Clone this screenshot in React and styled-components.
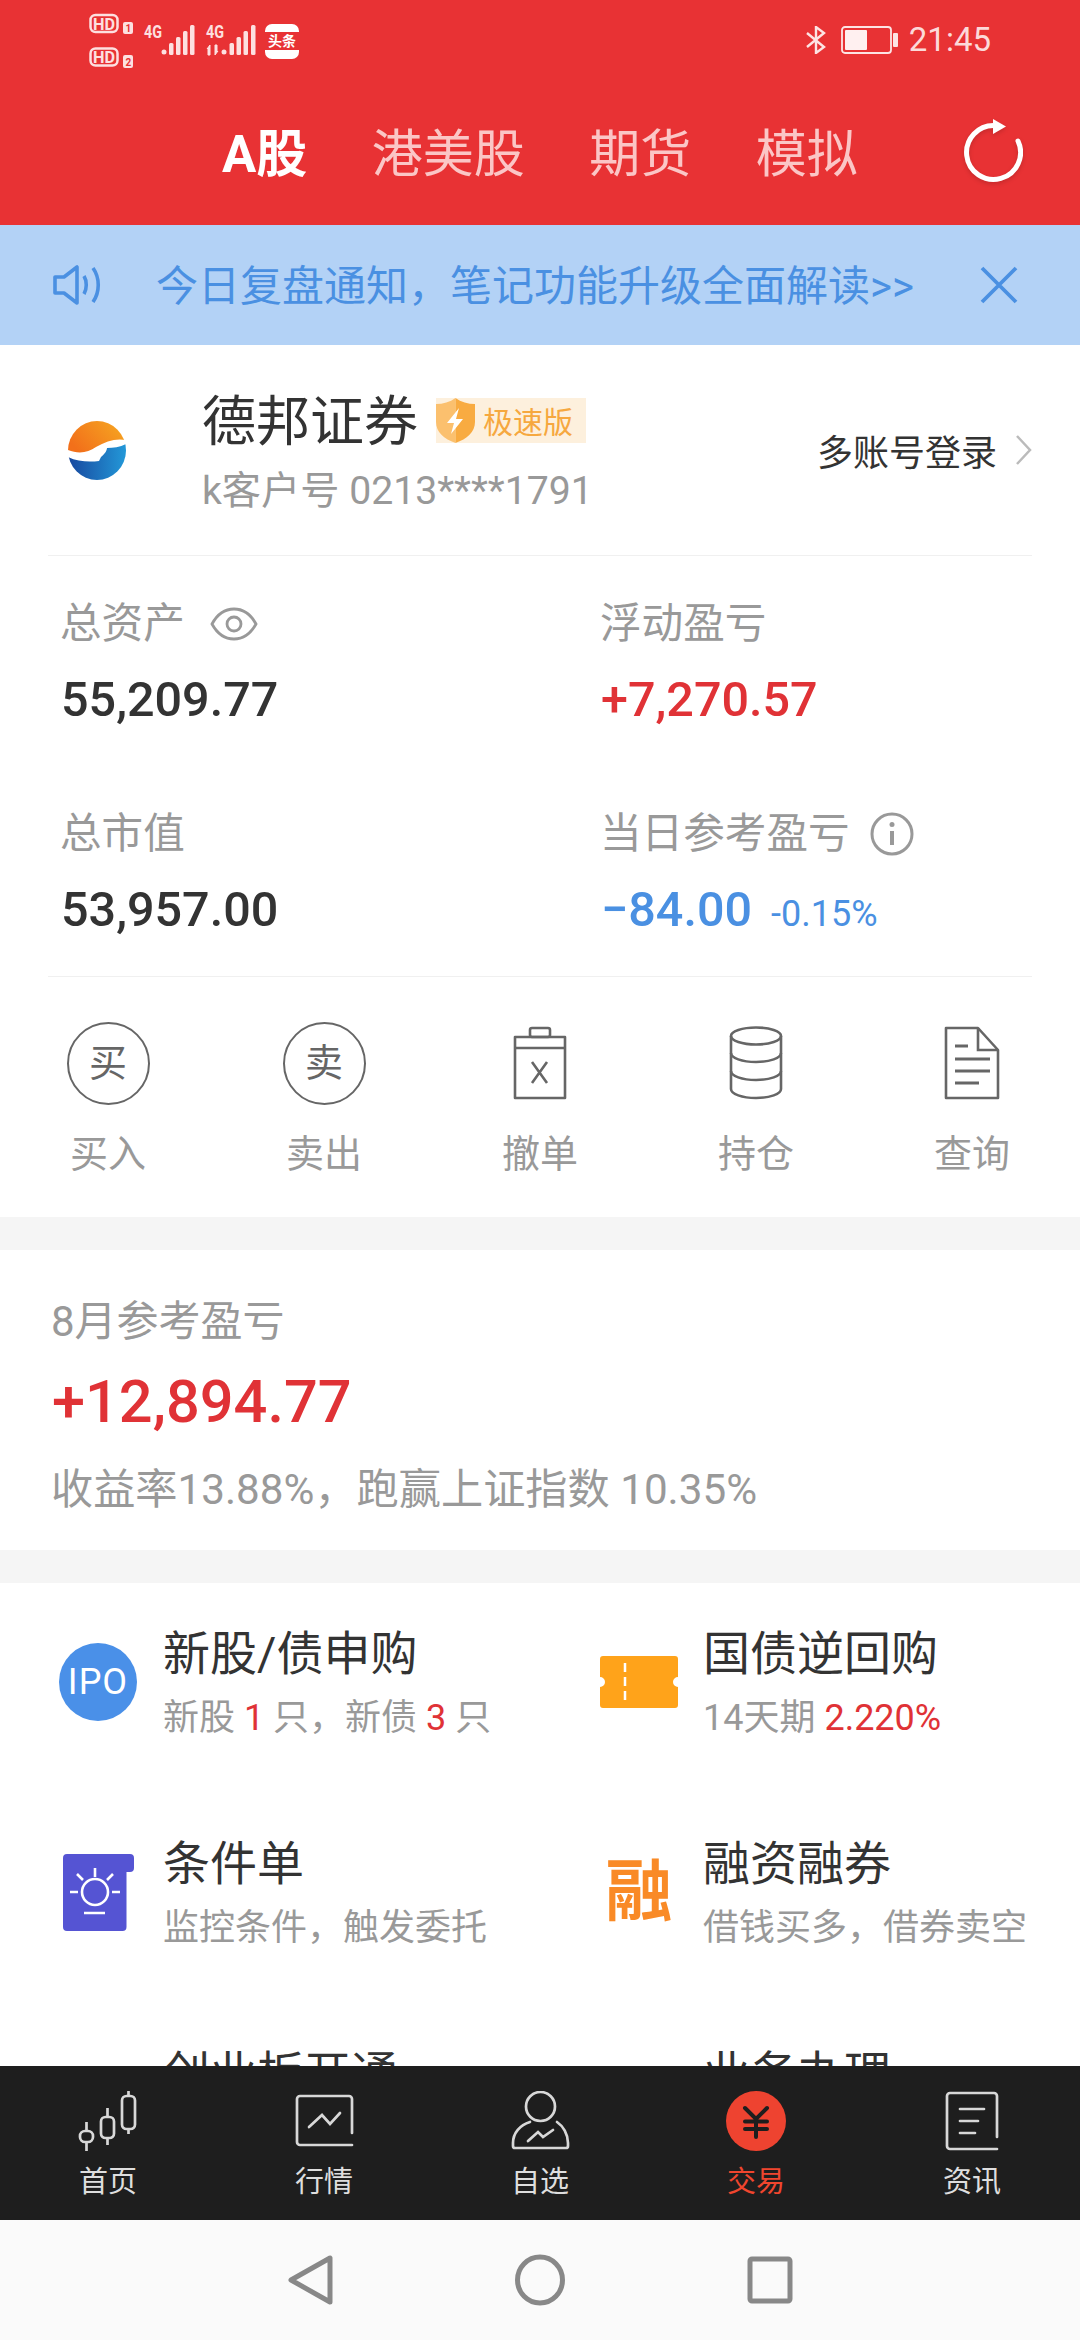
import React from "react";
import styled, { createGlobalStyle } from "styled-components";

const Global = createGlobalStyle`
  html, body { margin: 0; padding: 0; background: #fff; }
  body { font-family: Roboto, "Noto Sans CJK SC", sans-serif; }
  * { box-sizing: border-box; }
`;

const Page = styled.div`
  width: 1080px; height: 2340px; display: flex; flex-direction: column; overflow: hidden;
  background: #f5f5f5;
`;
const Header = styled.header`background: #e83234; height: 225px; flex: none;`;
const StatusBar = styled.div`height: 80px; display: flex; align-items: center; justify-content: space-between; padding: 0 89px 0 70px;`;
const StatusRight = styled.div`display: flex; align-items: center;`;
const Clock = styled.span`font-size: 33px; font-weight: 400; color: #fcd9d9; margin-left: 10px; line-height: 40px;`;
const Tabs = styled.nav`height: 145px; display: flex; align-items: center; gap: 64.5px; padding: 0 57px 0 222px;`;
const Tab = styled.span`
  font-size: 51px; line-height: 64px; margin-top: 5px;
  color: ${p => (p.$active ? "#fff" : "#fbc6c6")};
  font-weight: ${p => (p.$active ? 700 : 400)};
`;
const Refresh = styled.svg`margin-left: auto; flex: none; width: 60px; height: 68px; filter: drop-shadow(0 2px 2px rgba(0,0,0,.15));`;

const Notice = styled.div`
  height: 120px; flex: none; background: #b3d2f6; display: flex; align-items: center; padding: 0 62px 0 53px;
`;
const NoticeText = styled.span`font-size: 42px; line-height: 56px; padding-top: 3px; color: #4a90e2; margin-left: 53px; white-space: nowrap; flex: 1;`;

const Scroll = styled.main`flex: 1; min-height: 0; overflow: hidden; display: flex; flex-direction: column; gap: 33px;`;
const Card = styled.section`background: #fff; flex: ${p => (p.$fill ? 1 : "none")};`;

const AccountHead = styled.div`
  margin: 0 48px; padding: 30px 0 30px 20px; border-bottom: 1px solid #f0f0f0;
  display: flex; align-items: center;
`;
const Logo = styled.svg`width: 58px; height: 59px; flex: none;`;
const Identity = styled.div`margin-left: 76px; padding-top: 14px; flex: 1;`;
const TitleLine = styled.div`display: flex; align-items: center; height: 68px;`;
const BrokerName = styled.span`font-size: 54px; color: #333; line-height: 68px;`;
const SpeedBadge = styled.span`
  display: flex; align-items: center; height: 45px; margin-left: 18px; background: #fdf0dd; padding-right: 13px;
  font-size: 30px; color: #f6a83f; margin-top: -6px;
`;
const Shield = styled.svg`width: 39px; height: 45px; margin-right: 8px;`;
const AccountNo = styled.div`font-size: 39.2px; line-height: 68px; color: #999;`;
const LoginLink = styled.div`display: flex; align-items: center; font-size: 36px; color: #333; gap: 18px;`;
const Chevron = styled.svg`width: 17px; height: 32px;`;

const Stats = styled.div`display: grid; grid-template-columns: 1fr 1fr;`;
const StatCell = styled.div`padding: 43px 0 31px 61px;`;
const StatLabel = styled.div`display: flex; align-items: center; font-size: 41.6px; line-height: 50px; color: #999; margin-left: -1px; gap: ${p => p.$gap || 0}px;`;
const StatValue = styled.div`
  margin-top: 16px; font-size: 48.5px; line-height: 70px; height: 70px; font-weight: 500; color: ${p => p.$color || "#333"};
  display: flex; align-items: baseline;
`;
const Percent = styled.span`font-size: 36px; line-height: 1; font-weight: 400; margin-left: 19px;`;
const SmallIcon = styled.svg`flex: none;`;

const Rule = styled.div`margin: 0 48px; height: 1px; background: #f0f0f0;`;

const Actions = styled.div`display: grid; grid-template-columns: repeat(5, 1fr); padding: 44px 0 38px;`;
const Action = styled.div`display: flex; flex-direction: column; align-items: center;`;
const ActionIconBox = styled.div`height: 84px; display: flex; align-items: center; justify-content: center;`;
const Round = styled.span`
  width: 83px; height: 83px; border: 2.5px solid #666; border-radius: 50%; display: flex; align-items: center; justify-content: center;
  color: #666; font-size: 38px; line-height: 1;
`;
const ActionLabel = styled.span`margin-top: 24px; font-size: 38px; line-height: 50px; color: #999;`;

const Profit = styled.div`padding: 47px 0 35px 52px;`;
const ProfitLabel = styled.div`font-size: 42px; line-height: 50px; color: #999; margin-left: -1px;`;
const ProfitValue = styled.div`margin-top: 17px; font-size: 59.5px; line-height: 76px; font-weight: 500; color: #e03236;`;
const ProfitSub = styled.div`margin: 25px 0 0 -1px; font-size: 42.2px; line-height: 50px; color: #999; white-space: nowrap;`;

const Menu = styled.div`display: grid; grid-template-columns: 1fr 1fr;`;
const MenuItem = styled.div`display: flex; padding: 39px 0 50px;`;
const MenuIconSlot = styled.div`
  width: 163px; flex: none; height: 80px; margin-top: 20px; display: flex; align-items: center; justify-content: center; padding-left: ${p => p.$left || 0}px;
`;
const MenuText = styled.div`min-width: 0;`;
const MenuTitle = styled.div`font-size: 47px; line-height: 64px; color: #333; white-space: nowrap;`;
const MenuSub = styled.div`margin-top: 7px; font-size: 36px; line-height: 50px; color: #999; white-space: nowrap;`;
const Red = styled.span`color: #e03236;`;
const IpoIcon = styled.span`
  width: 78px; height: 78px; border-radius: 50%; background: #4a90e8; color: #fff; font-size: 36px; letter-spacing: 1px;
  display: flex; align-items: center; justify-content: center;
`;
const RongGlyph = styled.span`font-size: 67px; line-height: 70px; font-weight: 700; color: #f98a26;`;

const TabBar = styled.nav`height: 154px; flex: none; background: #1e1e1e; display: grid; grid-template-columns: repeat(5, 1fr); padding-top: 25px;`;
const TabItem = styled.div`display: flex; flex-direction: column; align-items: center;`;
const TabIcon = styled.svg`width: 60px; height: 60px;`;
const TabLabel = styled.span`margin-top: 13px; font-size: 29px; line-height: 36px; color: ${p => (p.$active ? "#f0462e" : "#dedede")};`;

const SystemBar = styled.div`height: 120px; flex: none; background: #fafafa; display: flex; align-items: center; justify-content: center;`;
const SysIcon = styled.svg`width: 50px; height: 52px; flex: none;`;
const SysIcons = styled.div`display: flex; align-items: center; width: 510px; justify-content: space-between;`;

const StatusLeftIcons = () => (
  <svg width="260" height="80" viewBox="0 0 260 80">
    <g fill="none" stroke="#fde0e0" strokeWidth="2.500">
      <rect x="20.500" y="15" width="27" height="17" rx="5" />
      <rect x="20.500" y="48.500" width="27" height="17" rx="5" />
    </g>
    <g fill="#fde0e0" fontFamily="Roboto, sans-serif" fontWeight="700">
      <text x="23" y="29.500" fontSize="16" textLength="22" lengthAdjust="spacingAndGlyphs">HD</text>
      <text x="23" y="63" fontSize="16" textLength="22" lengthAdjust="spacingAndGlyphs">HD</text>
      <rect x="53" y="22" width="10" height="12" rx="2" />
      <rect x="53" y="55" width="10" height="13" rx="2" />
      <text x="74" y="38" fontSize="19" textLength="18" lengthAdjust="spacingAndGlyphs">4G</text>
      <text x="136" y="38" fontSize="19" textLength="18" lengthAdjust="spacingAndGlyphs">4G</text>
      <circle cx="94" cy="52" r="2.500" />
      <rect x="99" y="43" width="4.500" height="12" rx="1.500" />
      <rect x="106" y="37" width="4.500" height="18" rx="1.500" />
      <rect x="113" y="31" width="4.500" height="24" rx="1.500" />
      <rect x="120" y="25" width="4.500" height="30" rx="1.500" />
      <path d="M140 45v10h-2v-7l-1 1zM145 55V45h2v7l1-1z" stroke="#fde0e0" strokeWidth="1" />
      <circle cx="154" cy="52" r="2.500" />
      <rect x="159.500" y="43" width="4.500" height="12" rx="1.500" />
      <rect x="166.500" y="37" width="4.500" height="18" rx="1.500" />
      <rect x="173.500" y="31" width="4.500" height="24" rx="1.500" />
      <rect x="181" y="25" width="4.500" height="30" rx="1.500" />
    </g>
    <g fill="#e83234" fontFamily="Roboto, sans-serif" fontWeight="700">
      <text x="55.500" y="32" fontSize="10">1</text>
      <text x="55.500" y="65.500" fontSize="10">2</text>
    </g>
    <rect x="195" y="24" width="34" height="35" rx="7" fill="#fff" />
    <rect x="195" y="32" width="34" height="18" fill="#e83234" />
    <text x="198" y="46" fontSize="14" fontWeight="700" fill="#fff" fontFamily="'Noto Sans CJK SC', sans-serif">头条</text>
  </svg>
);

const Speaker = () => (
  <svg width="50" height="42" viewBox="0 0 50 42" fill="none" stroke="#4a90e2" strokeWidth="3.600" style={{ flex: "none" }}>
    <path d="M2 13h9L24 3v36L11 29H2z" strokeLinejoin="round" />
    <path d="M31 12c3 5 3 13 0 18" />
    <path d="M40 4c7 10 7 24 0 34" />
  </svg>
);

const ActionCancel = () => (
  <svg width="54" height="74" viewBox="0 0 54 74" fill="none" stroke="#666" strokeWidth="2.600">
    <path d="M2 11h50v61H2z" strokeLinejoin="round" />
    <path d="M2 22h50" />
    <rect x="17" y="2" width="20" height="9" rx="2" />
    <path d="M19 36l15 21M34 36L19 57" />
  </svg>
);
const ActionHold = () => (
  <svg width="54" height="74" viewBox="0 0 54 74" fill="none" stroke="#666" strokeWidth="2.600">
    <ellipse cx="27" cy="10" rx="25" ry="8.500" />
    <path d="M2 10v53c0 5 11 9 25 9s25-4 25-9V10" />
    <path d="M2 27c0 5 11 9 25 9s25-4 25-9" />
    <path d="M2 45c0 5 11 9 25 9s25-4 25-9" />
  </svg>
);
const ActionQuery = () => (
  <svg width="56" height="74" viewBox="0 0 56 74" fill="none" stroke="#666" strokeWidth="2.600">
    <path d="M2 2h32l20 22v48H2z" strokeLinejoin="round" />
    <path d="M34 2v22h20" />
    <path d="M11 20h13M11 33h35M11 45h35M11 57h24" strokeWidth="2.800" />
  </svg>
);

const BulbIcon = () => (
  <svg width="71" height="77" viewBox="0 0 71 77">
    <path d="M4 0h63a4 4 0 0 1 4 4v10a4 4 0 0 1-4 4h-3.500v55a4 4 0 0 1-4 4H4a4 4 0 0 1-4-4V4a4 4 0 0 1 4-4z" fill="#5554d3" />
    <g fill="none" stroke="#fff" strokeWidth="2.600">
      <circle cx="32" cy="38" r="13" />
      <path d="M32 14v9M14 20l6 6M50 20l-6 6M7 38h8M49 38h8M21 59h21" />
    </g>
  </svg>
);
const TicketIcon = () => (
  <svg width="78" height="52" viewBox="0 0 78 52">
    <path d="M3 0h72a3 3 0 0 1 3 3v18a5 5 0 0 0 0 10v18a3 3 0 0 1-3 3H3a3 3 0 0 1-3-3V31a5 5 0 0 0 0-10V3a3 3 0 0 1 3-3z" fill="#ffa31a" />
    <path d="M25 7v37" stroke="#fff" strokeWidth="2.500" strokeDasharray="9 5" />
  </svg>
);

const IconStroke = "#d8d8d8";

export default function App() {
  return (
    <Page>
      <Global />
      <Header>
        <StatusBar>
          <StatusLeftIcons />
          <StatusRight>
            <svg width="20" height="28" viewBox="0 0 20 28" fill="none" stroke="#fde4e4" strokeWidth="2.400">
              <path d="M1 7l17 14-8 6V1l8 6L1 21" />
            </svg>
            <svg width="58" height="28" viewBox="0 0 58 28" style={{ marginLeft: 15 }}>
              <rect x="1" y="1" width="49" height="26" rx="3" fill="none" stroke="#fde4e4" strokeWidth="1.800" />
              <rect x="4" y="4" width="22" height="20" rx="1" fill="#fff0f0" />
              <rect x="52" y="7" width="5" height="14" rx="1" fill="#fde4e4" />
            </svg>
            <Clock>21:45</Clock>
          </StatusRight>
        </StatusBar>
        <Tabs>
          <Tab $active>A股</Tab>
          <Tab>港美股</Tab>
          <Tab>期货</Tab>
          <Tab>模拟</Tab>
          <Refresh viewBox="0 0 60 68" fill="none">
            <path d="M32 6.500A27 27 0 1 0 55 22" stroke="#fff" strokeWidth="5" strokeLinecap="round" />
            <path d="M30 0l13 7.500L30 15z" fill="#fff" />
          </Refresh>
        </Tabs>
      </Header>
      <Notice>
        <Speaker />
        <NoticeText>今日复盘通知，笔记功能升级全面解读&gt;&gt;</NoticeText>
        <svg width="38" height="38" viewBox="0 0 38 38" fill="none" stroke="#4a90e2" strokeWidth="3.800" style={{ flex: "none" }}>
          <path d="M2 2l34 34M36 2L2 36" />
        </svg>
      </Notice>
      <Scroll>
        <Card>
          <AccountHead>
            <Logo viewBox="0 0 58 59">
              <defs>
                <clipPath id="lg"><ellipse cx="29" cy="29.500" rx="29" ry="29.500" /></clipPath>
                <linearGradient id="lo" x1="0" x2="1" y1="0.600" y2="0.100">
                  <stop offset="0" stopColor="#f2701a" /><stop offset="1" stopColor="#f6a822" />
                </linearGradient>
                <linearGradient id="lb" x1="0" x2="1" y1="0.500" y2="0.500">
                  <stop offset="0" stopColor="#17479e" /><stop offset="1" stopColor="#2398d8" />
                </linearGradient>
              </defs>
              <g clipPath="url(#lg)">
                <path d="M0 29C10 33 20 32 28 26 38 20 48 17 58 19V0H0z" fill="url(#lo)" />
                <path d="M0 36C10 41 22 41 31 40L33 36C37 33 39 29 39 27 45 27 52 26 58 23V59H0z" fill="url(#lb)" />
              </g>
            </Logo>
            <Identity>
              <TitleLine>
                <BrokerName>德邦证券</BrokerName>
                <SpeedBadge>
                  <Shield viewBox="0 0 39 45">
                    <path d="M19.500 0C14 4 7 6 0 6v18c0 10 8 17 19.500 21z" fill="#fbc06e" />
                    <path d="M19.500 0c5.500 4 12.500 6 19.500 6v18c0 10-8 17-19.500 21z" fill="#f8ab41" />
                    <path d="M23 10L11 25h7l-3 11 12-15h-7z" fill="#fff" />
                  </Shield>
                  极速版
                </SpeedBadge>
              </TitleLine>
              <AccountNo>k客户号 0213****1791</AccountNo>
            </Identity>
            <LoginLink>
              多账号登录
              <Chevron viewBox="0 0 17 32" fill="none" stroke="#bbb" strokeWidth="2.500"><path d="M2 2l13 14L2 30" /></Chevron>
            </LoginLink>
          </AccountHead>
          <Stats>
            <StatCell>
              <StatLabel $gap={25}>
                总资产
                <SmallIcon width="48" height="34" viewBox="0 0 48 34" fill="none" stroke="#999" strokeWidth="2.800">
                  <path d="M2 17C8 6 16 2 24 2s16 4 22 15c-6 11-14 15-22 15S8 28 2 17z" />
                  <circle cx="24" cy="17" r="7" />
                </SmallIcon>
              </StatLabel>
              <StatValue>55,209.77</StatValue>
            </StatCell>
            <StatCell>
              <StatLabel>浮动盈亏</StatLabel>
              <StatValue $color="#e03236">+7,270.57</StatValue>
            </StatCell>
            <StatCell>
              <StatLabel>总市值</StatLabel>
              <StatValue>53,957.00</StatValue>
            </StatCell>
            <StatCell>
              <StatLabel $gap={20}>
                当日参考盈亏
                <SmallIcon width="44" height="44" viewBox="0 0 44 44" fill="none" stroke="#999" strokeWidth="3">
                  <circle cx="22" cy="22" r="20" />
                  <path d="M22 19v14" strokeWidth="4" />
                  <circle cx="22" cy="12.500" r="2.500" fill="#999" stroke="none" />
                </SmallIcon>
              </StatLabel>
              <StatValue $color="#4a90e2">−84.00<Percent>-0.15%</Percent></StatValue>
            </StatCell>
          </Stats>
          <Rule />
          <Actions>
            <Action><ActionIconBox><Round>买</Round></ActionIconBox><ActionLabel>买入</ActionLabel></Action>
            <Action><ActionIconBox><Round>卖</Round></ActionIconBox><ActionLabel>卖出</ActionLabel></Action>
            <Action><ActionIconBox><ActionCancel /></ActionIconBox><ActionLabel>撤单</ActionLabel></Action>
            <Action><ActionIconBox><ActionHold /></ActionIconBox><ActionLabel>持仓</ActionLabel></Action>
            <Action><ActionIconBox><ActionQuery /></ActionIconBox><ActionLabel>查询</ActionLabel></Action>
          </Actions>
        </Card>
        <Card>
          <Profit>
            <ProfitLabel>8月参考盈亏</ProfitLabel>
            <ProfitValue>+12,894.77</ProfitValue>
            <ProfitSub>收益率13.88%，跑赢上证指数 10.35%</ProfitSub>
          </Profit>
        </Card>
        <Card $fill>
          <Menu>
            <MenuItem>
              <MenuIconSlot $left={33}><IpoIcon>IPO</IpoIcon></MenuIconSlot>
              <MenuText><MenuTitle>新股/债申购</MenuTitle><MenuSub>新股 <Red>1</Red> 只，新债 <Red>3</Red> 只</MenuSub></MenuText>
            </MenuItem>
            <MenuItem>
              <MenuIconSlot $left={35}><TicketIcon /></MenuIconSlot>
              <MenuText><MenuTitle>国债逆回购</MenuTitle><MenuSub>14天期 <Red>2.220%</Red></MenuSub></MenuText>
            </MenuItem>
            <MenuItem>
              <MenuIconSlot $left={34}><BulbIcon /></MenuIconSlot>
              <MenuText><MenuTitle>条件单</MenuTitle><MenuSub>监控条件，触发委托</MenuSub></MenuText>
            </MenuItem>
            <MenuItem>
              <MenuIconSlot $left={35}><RongGlyph>融</RongGlyph></MenuIconSlot>
              <MenuText><MenuTitle>融资融券</MenuTitle><MenuSub>借钱买多，借券卖空</MenuSub></MenuText>
            </MenuItem>
            <MenuItem>
              <MenuIconSlot />
              <MenuText><MenuTitle>创业板开通</MenuTitle></MenuText>
            </MenuItem>
            <MenuItem>
              <MenuIconSlot />
              <MenuText><MenuTitle>业务办理</MenuTitle></MenuText>
            </MenuItem>
          </Menu>
        </Card>
      </Scroll>
      <TabBar>
        <TabItem>
          <TabIcon viewBox="0 0 60 60" fill="none" stroke={IconStroke} strokeWidth="2.700">
            <rect x="2" y="40" width="13" height="11" rx="5" /><path d="M8.500 31v9M8.500 51v9" />
            <rect x="23" y="26" width="13" height="21" rx="4.500" /><path d="M29.500 17v9M29.500 47v7" />
            <rect x="44" y="5" width="13" height="33" rx="4.500" /><path d="M50.500 0v5M50.500 38v5" />
          </TabIcon>
          <TabLabel>首页</TabLabel>
        </TabItem>
        <TabItem>
          <TabIcon viewBox="0 0 60 60" fill="none" stroke={IconStroke} strokeWidth="2.700" strokeLinecap="round">
            <path d="M58 42V8a3 3 0 0 0-3-3H6a3 3 0 0 0-3 3v43a3 3 0 0 0 3 3h52" />
            <path d="M15 36l13-12 8 9 10-11" />
          </TabIcon>
          <TabLabel>行情</TabLabel>
        </TabItem>
        <TabItem>
          <TabIcon viewBox="0 0 60 60" fill="none" stroke={IconStroke} strokeWidth="2.700" strokeLinecap="round">
            <circle cx="30.500" cy="15.500" r="14.500" />
            <path d="M20 31C10 34 3 42 3 52v3a2 2 0 0 0 2 2h51a2 2 0 0 0 2-2v-3c0-9-5-17-11-21" />
            <path d="M18 50l10-9 5 5 10-7" />
          </TabIcon>
          <TabLabel>自选</TabLabel>
        </TabItem>
        <TabItem>
          <TabIcon viewBox="0 0 60 60">
            <circle cx="30" cy="30" r="30" fill="#ee4330" />
            <path d="M19 17l11 11 11-11M19 30.500h22M19 38h22M30 28v18" fill="none" stroke="#1e1e1e" strokeWidth="4" strokeLinecap="round" />
          </TabIcon>
          <TabLabel $active>交易</TabLabel>
        </TabItem>
        <TabItem>
          <TabIcon viewBox="0 0 60 60" fill="none" stroke={IconStroke} strokeWidth="2.700" strokeLinecap="round">
            <path d="M55 46V5a3 3 0 0 0-3-3H8a3 3 0 0 0-3 3v50a3 3 0 0 0 3 3h47" />
            <path d="M18 18h24M18 30h18M18 42h15" />
          </TabIcon>
          <TabLabel>资讯</TabLabel>
        </TabItem>
      </TabBar>
      <SystemBar>
        <SysIcons>
          <SysIcon viewBox="0 0 50 52" fill="none" stroke="#888" strokeWidth="5" strokeLinejoin="round">
            <path d="M45 4v44L6 26z" />
          </SysIcon>
          <SysIcon viewBox="0 0 50 52" fill="none" stroke="#888" strokeWidth="5">
            <ellipse cx="25" cy="26" rx="22.500" ry="23" />
          </SysIcon>
          <SysIcon viewBox="0 0 50 52" fill="none" stroke="#888" strokeWidth="5" strokeLinejoin="round">
            <rect x="5" y="5" width="40" height="42" rx="2" />
          </SysIcon>
        </SysIcons>
      </SystemBar>
    </Page>
  );
}
